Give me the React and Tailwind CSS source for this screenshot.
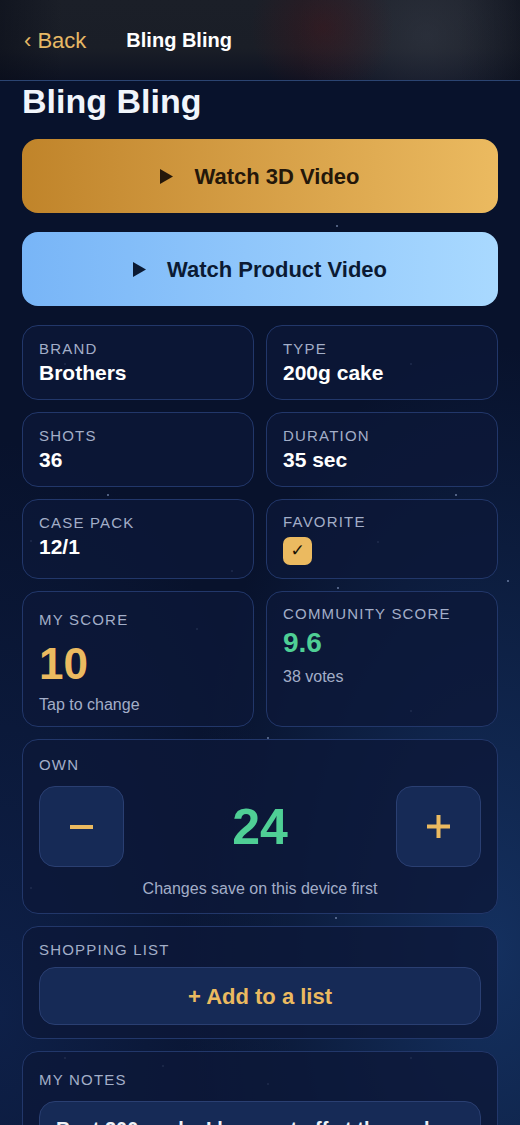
import React, { useState } from 'react';

const stars = [
  [336, 225], [107, 494], [455, 494], [410, 363], [30, 540], [377, 541], [196, 628], [267, 737],
  [410, 710], [335, 917], [30, 887], [64, 1057], [162, 1065], [267, 1083], [410, 1057], [507, 580],
  [64, 363], [231, 570], [337, 587],
];

function Play({ className }) {
  return (
    <svg viewBox="0 0 13 15" className={className} fill="currentColor">
      <polygon points="0,0 13,7.5 0,15" />
    </svg>
  );
}

function Card({ className = '', children }) {
  return (
    <div className={`rounded-2xl border border-[#22376a] bg-[#0c1838]/80 px-4 ${className}`}>{children}</div>
  );
}

function Label({ children }) {
  return <div className="text-[15px] leading-[18px] uppercase tracking-[0.08em] text-[#a3aec8]">{children}</div>;
}

function Stat({ label, value }) {
  return (
    <Card className="py-[14px]">
      <Label>{label}</Label>
      <div className="mt-[2px] text-[21px] leading-[25px] font-bold text-white">{value}</div>
    </Card>
  );
}

export default function App() {
  const [own, setOwn] = useState(24);
  const [fav, setFav] = useState(true);

  return (
    <div
      className="relative min-h-[1125px] overflow-hidden bg-[#08122c] bg-[radial-gradient(ellipse_at_95%_75%,#14305f_0%,transparent_45%),radial-gradient(ellipse_at_0%_80%,#0e2048_0%,transparent_40%)] text-white"
      style={{ fontFamily: '"Liberation Sans", Arial, sans-serif' }}
    >
      {stars.map(([x, y], i) => (
        <span
          key={i}
          className="absolute h-[2px] w-[2px] rounded-full bg-[#8fa3c8]/70"
          style={{ left: x, top: y }}
        />
      ))}

      <header className="relative flex h-[81px] items-center border-b border-[#2b4472] bg-[linear-gradient(180deg,#1b1f28_0%,#1a1e27_60%,#0d1222_100%)] px-6">
        <div className="pointer-events-none absolute inset-0 bg-[radial-gradient(circle_at_62%_35%,rgba(70,20,25,0.45)_0%,transparent_22%),radial-gradient(circle_at_82%_45%,rgba(60,66,80,0.45)_0%,transparent_30%),linear-gradient(90deg,rgba(8,12,24,0.5)_0%,transparent_12%,transparent_88%,rgba(8,12,24,0.6)_100%)]" />
        <button className="relative text-[22px] text-[#e6b865]">‹ Back</button>
        <div className="relative ml-[40px] text-[20px] font-bold text-white">Bling Bling</div>
      </header>

      <main className="relative px-[22px] pb-10">
        <h1 className="text-[34px] leading-[41px] font-bold text-[#f1f5fb]">Bling Bling</h1>

        <button className="mt-[17px] flex h-[74px] w-full items-center justify-center gap-[21px] rounded-2xl bg-gradient-to-r from-[#c0842a] to-[#ebba60] text-[22px] font-bold text-[#24170a]">
          <Play className="h-[15px] w-[13px]" />
          Watch 3D Video
        </button>

        <button className="mt-[19px] flex h-[74px] w-full items-center justify-center gap-[21px] rounded-2xl bg-gradient-to-r from-[#78b5f7] to-[#a9d9ff] text-[22px] font-bold text-[#0b1a33]">
          <Play className="h-[15px] w-[13px]" />
          Watch Product Video
        </button>

        <div className="mt-[19px] grid grid-cols-2 gap-3">
          <Stat label="Brand" value="Brothers" />
          <Stat label="Type" value="200g cake" />
          <Stat label="Shots" value="36" />
          <Stat label="Duration" value="35 sec" />
          <Stat label="Case Pack" value="12/1" />
          <Card className="py-[13px]">
            <Label>Favorite</Label>
            <button
              onClick={() => setFav(!fav)}
              className="mt-[6px] flex h-[28px] w-[29px] items-center justify-center rounded-[7px] bg-[#ebba60] text-[17px] font-bold text-[#1a1206]"
              style={{ fontFamily: '"DejaVu Sans", sans-serif' }}
            >
              {fav ? '✓' : ''}
            </button>
          </Card>
          <Card className="pt-[19px] pb-3">
            <Label>My Score</Label>
            <div className="mt-[10px] text-[44px] leading-[50px] font-bold text-[#ebba60]">10</div>
            <div className="mt-[6px] text-[16px] leading-[19px] text-[#a3aec8]">Tap to change</div>
          </Card>
          <Card className="pt-[13px] pb-3">
            <Label>Community Score</Label>
            <div className="mt-[3px] text-[28px] leading-[34px] font-bold text-[#4fcf95]">9.6</div>
            <div className="mt-[7px] text-[16px] leading-[19px] text-[#a3aec8]">38 votes</div>
          </Card>
        </div>

        <Card className="mt-3 pt-4 pb-[15px]">
          <Label>Own</Label>
          <div className="mt-3 flex items-center justify-between">
            <button
              onClick={() => setOwn(Math.max(0, own - 1))}
              className="flex h-[81px] w-[85px] items-center justify-center rounded-2xl border border-[#2a3f72] bg-[#162a56]"
            >
              <svg viewBox="0 0 23 4" className="h-[4px] w-[23px]" fill="#ebba60">
                <rect width="23" height="4" />
              </svg>
            </button>
            <div className="text-[50px] leading-none font-bold text-[#4fcf95]">{own}</div>
            <button
              onClick={() => setOwn(own + 1)}
              className="flex h-[81px] w-[85px] items-center justify-center rounded-2xl border border-[#2a3f72] bg-[#162a56]"
            >
              <svg viewBox="0 0 23 23" className="h-[23px] w-[23px]" fill="#ebba60">
                <rect x="9.5" width="4" height="23" />
                <rect y="9.5" width="23" height="4" />
              </svg>
            </button>
          </div>
          <div className="mt-3 text-center text-[16px] leading-[19px] text-[#a3aec8]">Changes save on this device first</div>
        </Card>

        <Card className="mt-3 pt-[14px] pb-[13px]">
          <Label>Shopping List</Label>
          <button className="mt-2 flex h-[58px] w-full items-center justify-center rounded-2xl border border-[#2a3f72] bg-[#162a56] text-[22px] font-bold text-[#ebba60]">
            + Add to a list
          </button>
        </Card>

        <Card className="mt-3 pt-[19px] pb-4">
          <Label>My Notes</Label>
          <div className="mt-3 rounded-2xl border border-[#2a3f72] bg-[#162a56] px-4 pt-[14px] pb-4 text-[20px] leading-[26px] font-bold text-[#eef2f8]">
            Best 200g cake I have set off at the park. Bought two more cases for the Fourth of July.
          </div>
        </Card>
      </main>
    </div>
  );
}
